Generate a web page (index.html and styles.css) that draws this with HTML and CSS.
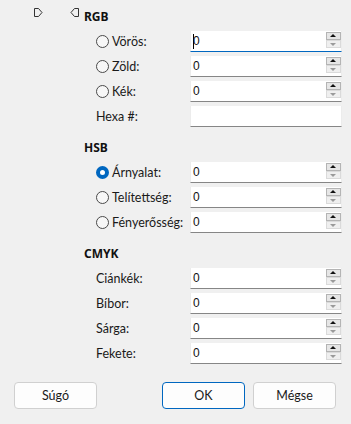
FILE: index.html
```html
<!DOCTYPE html>
<html lang="hu">
<head>
<meta charset="utf-8">
<title>Színválasztó</title>
<link rel="stylesheet" href="styles.css">
</head>
<body>
<div class="dialog">
  <div class="main">
    <div class="marks">
      <svg class="mark" width="9" height="9" viewBox="0 0 9 9"><path d="M0.5 0.5H4.5L8 4.5L4.5 8.5H0.5Z" fill="none" stroke="#333" stroke-width="1"/></svg>
      <svg class="mark" width="9" height="9" viewBox="0 0 9 9"><path d="M8.5 0.5H4.5L1 4.5L4.5 8.5H8.5Z" fill="none" stroke="#333" stroke-width="1"/></svg>
    </div>
    <div class="sections">
      <section class="group">
        <h2 class="heading">RGB</h2>
        <div class="row">
          <label class="label"><span class="radio"></span>Vörös:</label>
          <div class="field focused"><span class="value"><span class="caret"></span>0</span><span class="spin"><span class="up"></span><span class="down"></span></span></div>
        </div>
        <div class="row">
          <label class="label"><span class="radio"></span>Zöld:</label>
          <div class="field"><span class="value">0</span><span class="spin"><span class="up"></span><span class="down"></span></span></div>
        </div>
        <div class="row">
          <label class="label"><span class="radio"></span>Kék:</label>
          <div class="field"><span class="value">0</span><span class="spin"><span class="up"></span><span class="down"></span></span></div>
        </div>
        <div class="row">
          <label class="label">Hexa #:</label>
          <div class="field"><span class="value"></span></div>
        </div>
      </section>
      <section class="group">
        <h2 class="heading">HSB</h2>
        <div class="row">
          <label class="label"><span class="radio checked"></span>Árnyalat:</label>
          <div class="field"><span class="value">0</span><span class="spin"><span class="up"></span><span class="down"></span></span></div>
        </div>
        <div class="row">
          <label class="label"><span class="radio"></span>Telítettség:</label>
          <div class="field"><span class="value">0</span><span class="spin"><span class="up"></span><span class="down"></span></span></div>
        </div>
        <div class="row">
          <label class="label"><span class="radio"></span>Fényerősség:</label>
          <div class="field"><span class="value">0</span><span class="spin"><span class="up"></span><span class="down"></span></span></div>
        </div>
      </section>
      <section class="group">
        <h2 class="heading">CMYK</h2>
        <div class="row">
          <label class="label">Ciánkék:</label>
          <div class="field"><span class="value">0</span><span class="spin"><span class="up"></span><span class="down"></span></span></div>
        </div>
        <div class="row">
          <label class="label">Bíbor:</label>
          <div class="field"><span class="value">0</span><span class="spin"><span class="up"></span><span class="down"></span></span></div>
        </div>
        <div class="row">
          <label class="label">Sárga:</label>
          <div class="field"><span class="value">0</span><span class="spin"><span class="up"></span><span class="down"></span></span></div>
        </div>
        <div class="row">
          <label class="label">Fekete:</label>
          <div class="field"><span class="value">0</span><span class="spin"><span class="up"></span><span class="down"></span></span></div>
        </div>
      </section>
    </div>
  </div>
  <div class="buttons">
    <button class="btn">Súgó</button>
    <div class="btn-group">
      <button class="btn default">OK</button>
      <button class="btn">Mégse</button>
    </div>
  </div>
</div>
</body>
</html>
```
FILE: styles.css
```css
html, body {
  margin: 0;
  padding: 0;
  background: #f0f0f0;
}
body {
  font-family: "Lato", "Noto Sans", sans-serif;
  font-size: 12.5px;
  color: #1a1a1a;
}
.dialog {
  width: 351px;
  height: 424px;
  display: flex;
  flex-direction: column;
}
.main {
  display: grid;
  grid-template-columns: 84px 1fr;
}
.marks {
  display: flex;
  align-items: flex-start;
  gap: 27px;
  padding: 8px 0 0 34px;
}
.mark {
  display: block;
}
.sections {
  padding-top: 9px;
  display: flex;
  flex-direction: column;
  gap: 13px;
}
.group {
  display: flex;
  flex-direction: column;
  gap: 4px;
}
.heading {
  margin: 0 0 2px;
  height: 16px;
  line-height: 16px;
  font-family: "Noto Sans", sans-serif;
  font-size: 12px;
  font-weight: bold;
  color: #111;
}
.row {
  display: flex;
  align-items: center;
  padding-left: 12px;
  height: 21px;
}
.label {
  width: 94px;
  display: flex;
  align-items: center;
  gap: 3px;
  white-space: nowrap;
  line-height: 16px;
}
.radio {
  width: 11px;
  height: 11px;
  border: 1px solid #4a4a4a;
  border-radius: 50%;
  background: #f7f7f7;
  flex: none;
}
.radio.checked {
  width: 5px;
  height: 5px;
  border: 4px solid #0067c0;
  background: #fff;
}
.field {
  width: 150px;
  height: 20px;
  background: #fff;
  border: 1px solid #ececec;
  border-bottom-color: #868686;
  border-top: none;
  display: flex;
  align-items: flex-start;
  box-sizing: content-box;
}
.field.focused {
  border-bottom-color: #0067c0;
}
.value {
  flex: 1;
  padding-left: 2px;
  line-height: 20px;
  font-family: "Liberation Sans", sans-serif;
  font-size: 12px;
  color: #111;
  display: flex;
  align-items: center;
}
.caret {
  display: inline-block;
  width: 0;
  height: 15px;
  border-left: 1px solid #000;
  margin-right: -1px;
}
.spin {
  display: flex;
  flex-direction: column;
  margin: 1px 0 0 0;
}
.up, .down {
  width: 13px;
  height: 6px;
  position: relative;
}
.up {
  border: 1px solid #b4b4b4;
  background: #e6e6e6;
}
.down {
  border: 1px solid #dadada;
  background: #efefef;
}
.up::after, .down::after {
  content: "";
  position: absolute;
  left: 3px;
  border-left: 3.5px solid transparent;
  border-right: 3.5px solid transparent;
}
.up::after {
  border-bottom: 3px solid #111;
  top: 1px;
}
.down::after {
  border-top: 3px solid #9a9a9a;
  top: 2px;
}
.buttons {
  display: flex;
  justify-content: space-between;
  padding: 0 15px 0 14px;
  margin-top: 18px;
}
.btn-group {
  display: flex;
  gap: 8px;
}
.btn {
  width: 83px;
  height: 27px;
  box-sizing: border-box;
  border: 1px solid #d0d0d0;
  border-radius: 4px;
  background: #fdfdfd;
  font-family: "Lato", "Noto Sans", sans-serif;
  font-size: 12.5px;
  color: #1a1a1a;
  padding: 0;
}
.btn.default {
  border-color: #0067c0;
}
```
